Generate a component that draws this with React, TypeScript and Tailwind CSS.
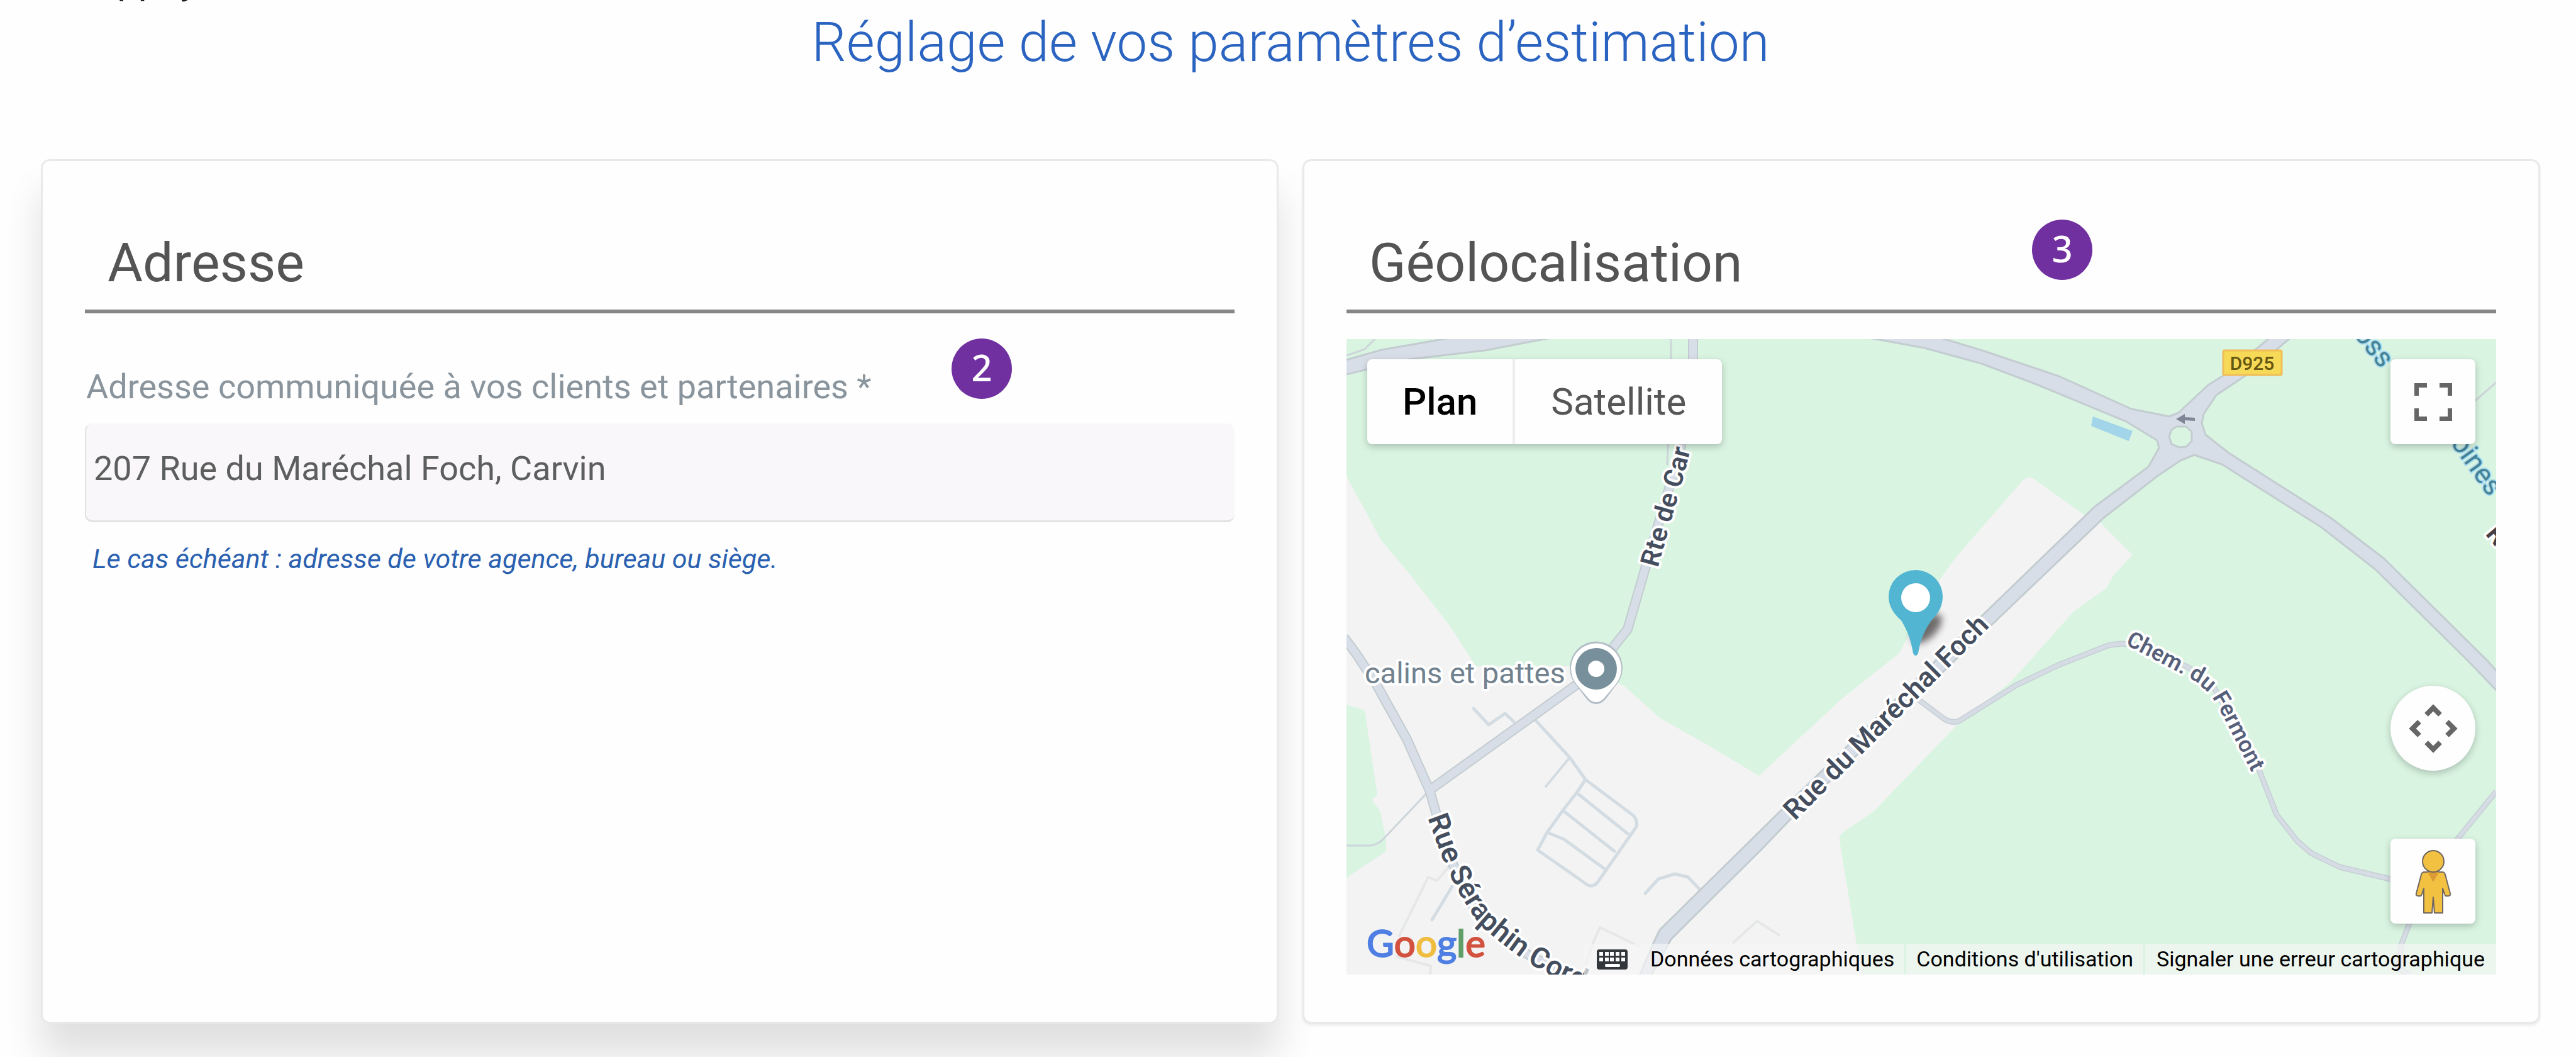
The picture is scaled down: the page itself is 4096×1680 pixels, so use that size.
import type { ReactNode } from "react";

const roads = "#d8dee7";
const roadEdge = "#c3ccd0";

function StepBadge({ step, className }: { step: number; className: string }) {
  return (
    <span
      className={`absolute flex h-24 w-24 items-center justify-center rounded-full bg-[#7030a0] pb-1 font-['Noto_Sans',sans-serif] text-[58px] leading-none font-medium text-white ${className}`}
    >
      {step}
    </span>
  );
}

function Card({ title, className = "", children }: { title: string; className?: string; children: ReactNode }) {
  return (
    <section className={`relative rounded-[14px] border-3 border-[#e9e9e9] bg-[#fefefe] px-[67px] pt-[112px] pb-[75px] ${className}`}>
      <h2 className="border-b-6 border-[#868686] pb-6 pl-9 text-[86px] leading-[100px] text-[#545454]">{title}</h2>
      {children}
    </section>
  );
}

function MapCanvas() {
  return (
    <svg viewBox="0 0 1828 1010" preserveAspectRatio="xMidYMid slice" className="block h-full w-full" aria-hidden="true">
      <rect width="1828" height="1010" fill="#d9f4e1" />

      {/* Built-up area */}
      <path
        d="M0 218 L56 321 L96 368 L163 454 L206 520 L362 520 L440 550 L498 602 L569 642 L656 694 L786 573 L878 500 L942 384 L968 348 L1074 226 Q1083 216 1094 223 L1171 278 L1198 291 L1250 343 L1219 376 L1208 396 L1156 433 L1087 511 L1056 545 L971 613 L838 751 L788 785 Q783 790 784 797 L811 961 L820 1010 L0 1010 Z"
        fill="#f3f3f3"
      />
      <path d="M0 581 L29 590 L49 724 L40 732 L54 751 L63 797 L63 814 L0 856 Z" fill="#d9f4e1" />

      {/* Footpaths and service roads */}
      <g fill="none" strokeLinejoin="round">
        <g stroke="#e5e7e9" strokeWidth="4">
          <path d="M168 832 L144 861 L130 855 L83 950" />
          <path d="M78 981 L134 996 L133 1010" />
          <path d="M375 1010 L391 962 L403 935 L467 966" />
          <path d="M614 960 L653 925 L689 948" />
        </g>
        <g stroke="#cdd5da" strokeWidth="3">
          <path d="M0 26 L29 16 L45 0" />
          <path d="M516 0 L516 33 L510 200" />
          <path d="M132 717 L60 793 Q50 804 38 805 L0 805" />
          <path d="M1828 69 L1790 102" />
        </g>
        <g stroke="#d3dce2" strokeWidth="5" strokeLinecap="round">
          <path d="M202 587 L226 613 L252 595 L266 608" />
          <path d="M355 665 L317 711" strokeWidth="4" />
          <path d="M168 870 L136 923" />
          <path d="M299 604 L355 665 L380 700 L456 757 Q463 765 461 775 L398 865 Q391 871 384 868 L304 812 L319 784 L344 749 L366 721 L380 700" />
          <path d="M366 721 L447 786" />
          <path d="M344 749 L426 814" />
          <path d="M319 784 L346 795 L409 841" />
          <path d="M475 881 L496 858 L522 850 L543 855 L563 876" />
        </g>
      </g>

      {/* Chemin du Fermont */}
      <g fill="none" strokeLinejoin="round">
        <path
          d="M900 566 L951 604 Q963 611 974 607 L1065 550 L1132 518 L1208 488 Q1240 478 1280 494 L1339 522 L1379 553 L1450 682 L1479 756 L1512 798 L1534 817 L1579 839 L1659 858 L1730 850"
          stroke="#c6ced6"
          strokeWidth="9"
        />
        <path
          d="M900 566 L951 604 Q963 611 974 607 L1065 550 L1132 518 L1208 488 Q1240 478 1280 494 L1339 522 L1379 553 L1450 682 L1479 756 L1512 798 L1534 817 L1579 839 L1659 858 L1730 850"
          stroke="#d6dce3"
          strokeWidth="6"
        />
        <path d="M1828 719 L1767 794 L1690 929 L1678 960 L1672 1000 L1690 1010" stroke="#c6ced6" strokeWidth="9" />
        <path d="M1828 719 L1767 794 L1690 929 L1678 960 L1672 1000 L1690 1010" stroke="#d6dce3" strokeWidth="6" />
      </g>

      {/* Secondary roads */}
      <g fill="none" strokeLinejoin="round">
        <g stroke={roadEdge} strokeWidth="16">
          <path d="M551 0 L551 60 L530 180 L476 361 L447 461 L397 524 L362 552 L132 717" />
          <path d="M-4 474 L16 501 L47 548 L96 636 L132 717 L143 755 L168 832 L203 905 L279 973 L370 1020" />
        </g>
        <g stroke={roads} strokeWidth="12">
          <path d="M551 0 L551 60 L530 180 L476 361 L447 461 L397 524 L362 552 L132 717" />
          <path d="M-4 474 L16 501 L47 548 L96 636 L132 717 L143 755 L168 832 L203 905 L279 973 L370 1020" />
        </g>
      </g>

      {/* Main roads and roundabout */}
      <g fill={roads} stroke={roadEdge} strokeWidth="3" strokeLinejoin="round">
        <path d="M-4 34 L56 17 L165 -2 L325 -2 L220 18 L100 32 L-4 57 Z" />
        <path d="M831 -2 L945 -2 L1014 19 L1133 59 L1248 111 L1289 119 L1308 123 L1323 117 L1370 73 L1394 58 L1468 -2 L1501 -2 L1428 59 L1383 89 L1363 119 L1360 134 L1366 152 L1403 181 L1565 284 L1650 349 L1814 511 L1832 531 L1832 562 L1783 511 L1636 366 L1550 299 L1392 199 L1348 184 L1326 193 L1289 218 L1204 284 L1026 454 L706 763 L659 812 L543 927 L516 954 L483 1014 L465 1014 L487 962 L498 939 L689 751 L1007 443 L1190 266 L1275 203 L1292 173 L1289 161 L1240 131 L1095 71 L1010 39 L919 14 Z" />
        <path d="M1320 139 L1335 139 L1344 147 L1344 162 L1335 171 L1324 172 L1312 167 L1308 155 L1312 144 Z" fill="#d9f4e1" />
      </g>
      <path d="M1319 127 L1333 119 L1333 124 L1349 125 L1349 130 L1333 129 L1333 135 Z" fill="#7f8796" />
      <path d="M1187 123 L1250 146 L1244 162 L1184 138 Z" fill="#a2d4ea" />

      {/* Road number */}
      <rect x="1394" y="18" width="93" height="39" rx="2" fill="#f6d957" stroke="#f0bd57" strokeWidth="3" />
      <text x="1440" y="49" textAnchor="middle" fontSize="30" fontWeight="500" fill="#655610">
        D925
      </text>

      {/* Street names */}
      <defs>
        <path id="rte" d="M495 364 L513 300 L537 215 L549 168 L560 120" />
        <path id="foch" d="M713 766 L1040 440" />
        <path id="seraphin" d="M129 761 L150 818 Q172 876 212 931 Q255 970 297 996 L330 1014 L420 1056" />
        <path id="fermont" d="M1238 485 L1328 532 L1348 543 L1374 565 L1390 592 L1437 684 L1460 740" />
        <path id="fosse" d="M1586 -26 L1672 82" />
        <path id="moines" d="M1755 165 L1845 291" />
      </defs>
      <g fontWeight="600" fill="#454e5e" stroke="#fff" strokeWidth="8" strokeLinejoin="round" paintOrder="stroke">
        <text fontSize="42">
          <textPath href="#rte">Rte de Car</textPath>
        </text>
        <text fontSize="44">
          <textPath href="#foch">Rue du Maréchal Foch</textPath>
        </text>
        <text fontSize="46">
          <textPath href="#seraphin">Rue Séraphin Cord</textPath>
        </text>
        <text fontSize="36" fill="#56607a">
          <textPath href="#fermont">Chem. du Fermont</textPath>
        </text>
        <text fontSize="42" fill="#453f46" transform="translate(1810 310) rotate(50)">
          R
        </text>
      </g>
      <g fontSize="44" fontWeight="400" fill="#468293" stroke="#a8dcf2" strokeWidth="4" paintOrder="stroke">
        <text>
          <textPath href="#fosse">Foss</textPath>
        </text>
        <text>
          <textPath href="#moines">oines</textPath>
        </text>
      </g>
      <text x="29" y="547" fontSize="47" fill="#71818e" stroke="#fff" strokeWidth="8" strokeLinejoin="round" paintOrder="stroke">
        calins et pattes
      </text>

      {/* Place marker */}
      <path d="M397 580 Q388 580 381 571 L367 552 A42 42 0 1 1 427 552 L413 571 Q406 580 397 580 Z" fill="#b4bdc6" />
      <path d="M397 577 Q389 577 383 569 L367 550 A40 40 0 1 1 427 550 L411 569 Q405 577 397 577 Z" fill="#fff" />
      <circle cx="397" cy="524" r="33" fill="#78909c" />
      <circle cx="397" cy="524" r="13" fill="#fff" />

      {/* Address marker */}
      <defs>
        <filter id="soft" x="-50%" y="-50%" width="200%" height="200%">
          <feGaussianBlur stdDeviation="6" />
        </filter>
      </defs>
      <ellipse cx="923" cy="460" rx="30" ry="15" transform="rotate(-45 923 460)" fill="#4d4848" opacity="0.8" filter="url(#soft)" />
      <path d="M905 503 Q901 503 900 494 Q896 470 882 447 Q862 430 862 409 A43 42 0 0 1 948 409 Q948 430 930 447 Q914 470 910 494 Q909 503 905 503 Z" fill="#52b5d2" />
      <circle cx="905" cy="411" r="23" fill="#fff" />
    </svg>
  );
}

function FullscreenIcon() {
  return (
    <svg viewBox="0 0 60 60" className="h-15 w-15" fill="none" stroke="#666" strokeWidth="7" aria-hidden="true">
      <path d="M3.5 20 V3.5 H20 M40 3.5 H56.5 V20 M56.5 40 V56.5 H40 M20 56.5 H3.5 V40" />
    </svg>
  );
}

function PanIcon() {
  return (
    <svg viewBox="0 0 78 78" className="h-[78px] w-[78px]" fill="none" stroke="#666" strokeWidth="8" aria-hidden="true">
      <path d="M28 17 L39 6 L50 17 M28 61 L39 72 L50 61 M17 28 L6 39 L17 50 M61 28 L72 39 L61 50" />
    </svg>
  );
}

function PegmanIcon() {
  return (
    <svg viewBox="0 0 58 102" className="h-[102px] w-[58px]" aria-hidden="true">
      <path
        d="M15 36 H43 Q47 36 48 40 L56 70 Q57 74 53 74 L49 74 Q48 74 47 71 L44 62 V101 H31 L29 76 L27 101 H14 V62 L11 71 Q10 74 9 74 L5 74 Q1 74 2 70 L10 40 Q11 36 15 36 Z"
        fill="#f3c142"
        stroke="#6f675f"
        strokeWidth="2"
        strokeLinejoin="round"
      />
      <path d="M20 36 H38 L29 52 Z" fill="#dc9a35" />
      <circle cx="29" cy="19" r="17" fill="#f3c142" stroke="#6f675f" strokeWidth="2" />
    </svg>
  );
}

function KeyboardIcon() {
  return (
    <svg viewBox="0 0 49 32" className="h-8 w-[49px]" aria-hidden="true">
      <rect width="49" height="32" rx="4" fill="#33373b" />
      <g fill="#fff">
        {[4, 13, 21, 30, 39].map((x) => (
          <rect key={x} x={x} y="4" width="6" height="6" />
        ))}
        {[4, 13, 21, 30, 39].map((x) => (
          <rect key={x} x={x} y="13" width="6" height="6" />
        ))}
        <rect x="13" y="23" width="24" height="5" rx="2" />
      </g>
    </svg>
  );
}

const controlShadow = "shadow-[0_4px_12px_rgba(0,0,0,0.22)]";

function GeoMap() {
  return (
    <div className="relative mt-[41px] aspect-[1828/1010] overflow-hidden">
      <MapCanvas />

      <div className={`absolute top-8 left-[33px] flex rounded-[8px] bg-[#fefefe] text-[60px] leading-[135px] ${controlShadow}`}>
        <button type="button" className="px-14 font-medium text-black">
          Plan
        </button>
        <button type="button" className="border-l-4 border-[#ededed] px-[57px] text-[#565656]">
          Satellite
        </button>
      </div>

      <button
        type="button"
        aria-label="Passer en plein écran"
        className={`absolute top-8 right-[33px] flex h-[135px] w-[135px] items-center justify-center rounded-[8px] bg-[#fefefe] ${controlShadow}`}
      >
        <FullscreenIcon />
      </button>

      <div className="absolute right-[33px] bottom-[81px] flex flex-col gap-[108px]">
        <button
          type="button"
          aria-label="Commandes de la caméra"
          className={`flex h-[135px] w-[135px] items-center justify-center rounded-full bg-[#fefefe] ${controlShadow}`}
        >
          <PanIcon />
        </button>
        <button
          type="button"
          aria-label="Street View"
          className={`flex h-[135px] w-[135px] items-center justify-center rounded-[8px] bg-[#fefefe] ${controlShadow}`}
        >
          <PegmanIcon />
        </button>
      </div>

      {/* Logo: one colour per letter */}
      <a
        href="#google"
        className="absolute bottom-4 left-8 flex font-['Lato',sans-serif] text-[60px] leading-[70px] text-[#4f7fe3] [-webkit-text-stroke:2px_currentColor]"
      >
        <span>G</span>
        <span className="text-[#d3523f] [-webkit-text-stroke:2px_#d3523f]">o</span>
        <span className="text-[#efbd3f] [-webkit-text-stroke:2px_#efbd3f]">o</span>
        <span>g</span>
        <span className="text-[#5f9e66] [-webkit-text-stroke:2px_#5f9e66]">l</span>
        <span className="text-[#d3523f] [-webkit-text-stroke:2px_#d3523f]">e</span>
      </a>

      <div className="absolute right-0 bottom-0 flex gap-[3px] text-[34px] leading-[49px] text-black">
        <div className="flex items-center bg-[#f5f5f5]/70">
          <button type="button" aria-label="Raccourcis clavier" className="px-5">
            <KeyboardIcon />
          </button>
          <button type="button" className="px-4">
            Données cartographiques
          </button>
        </div>
        <a href="#conditions" className="bg-[#f5f5f5]/70 px-4">
          Conditions d'utilisation
        </a>
        <a href="#signaler" className="bg-[#f5f5f5]/70 px-[18px]">
          Signaler une erreur cartographique
        </a>
      </div>
    </div>
  );
}

export default function App() {
  return (
    <main className="min-h-screen overflow-hidden bg-[#fefefe] pr-[57px] pb-[53px] pl-[65px] font-['Roboto',sans-serif]">
      <p className="mt-[-60px] pl-[82px] text-[60px] leading-[60px] text-[#222]">Appuyez</p>

      <h1 className="mt-[17px] text-center text-[87px] leading-[100px] font-light text-[#2a63c0]">
        Réglage de vos paramètres d’estimation
      </h1>

      <div className="mt-[136px] grid grid-cols-2 gap-[38px]">
        <Card title="Adresse" className="shadow-[0_52px_60px_rgba(0,0,0,0.12)]">
          <StepBadge step={2} className="top-[282px] left-[1445px]" />
          <label htmlFor="adresse" className="mt-[85px] block pl-0.5 text-[54px] leading-[64px] text-[#89949c]">
            Adresse communiquée à vos clients et partenaires *
          </label>
          <input
            id="adresse"
            type="text"
            defaultValue="207 Rue du Maréchal Foch, Carvin"
            aria-describedby="adresse-aide"
            className="mt-[26px] block h-[157px] w-full rounded-[12px] border-b-3 border-l-2 border-[#e2e2e2] bg-[#faf7fa] pb-3 pl-3 text-[54px] text-[#5d5e5e] outline-none"
          />
          <p id="adresse-aide" className="mt-8 pl-3 text-[43px] leading-[52px] text-[#2a60b0] italic">
            Le cas échéant : adresse de votre agence, bureau ou siège.
          </p>
        </Card>

        <Card title="Géolocalisation" className="shadow-[0_3px_4px_rgba(0,0,0,0.08)]">
          <StepBadge step={3} className="top-[93px] left-[1157px]" />
          <GeoMap />
        </Card>
      </div>
    </main>
  );
}
